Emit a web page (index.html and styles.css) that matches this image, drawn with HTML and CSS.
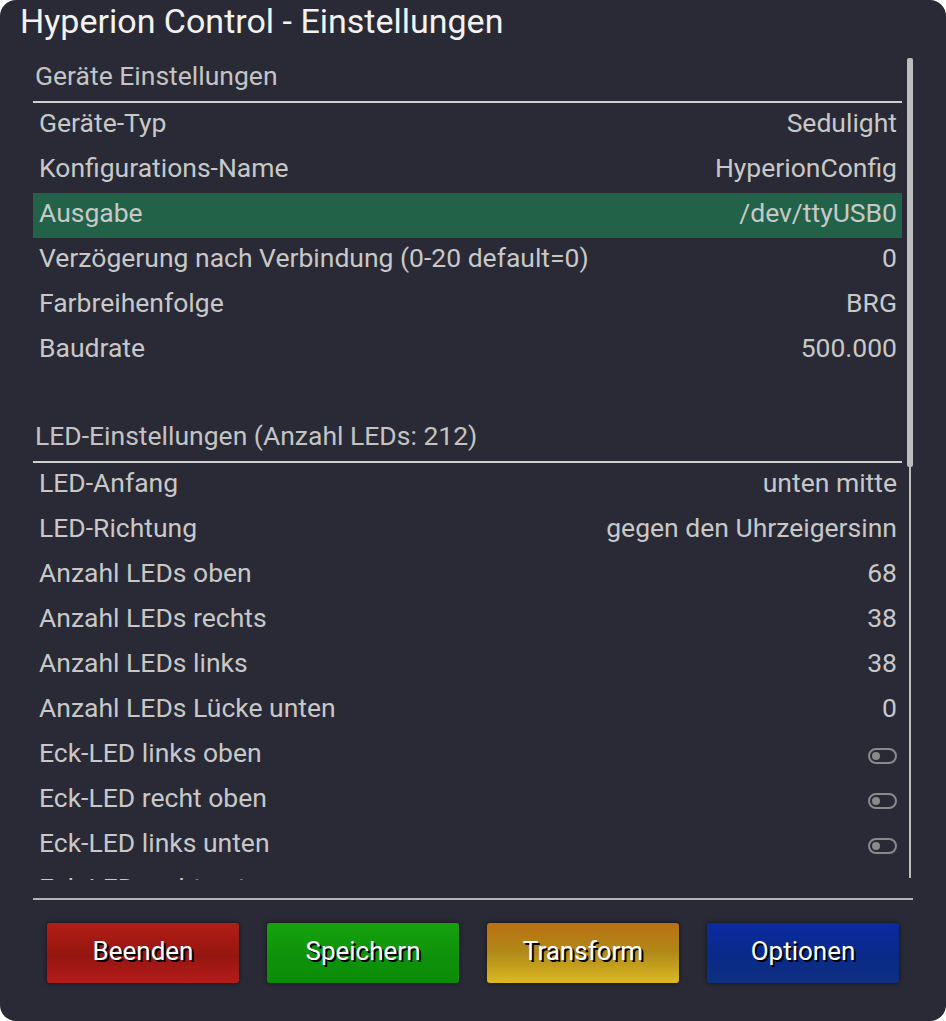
FILE: index.html
```html
<!DOCTYPE html>
<html lang="de">
<head>
  <meta charset="UTF-8">
  <meta name="viewport" content="width=device-width, initial-scale=1.0">
  <title>Hyperion Control - Einstellungen</title>
  <link rel="stylesheet" href="styles.css">
</head>
<body>

  <!-- Fenster -->
  <div class="window">
    <h1 class="title">Hyperion Control - Einstellungen</h1>

    <!-- Liste mit Scrollbalken -->
    <div class="main">
      <div class="list">
        <div class="section">Geräte Einstellungen</div>
        <div class="row"><span>Geräte-Typ</span><span>Sedulight</span></div>
        <div class="row"><span>Konfigurations-Name</span><span>HyperionConfig</span></div>
        <div class="row selected"><span>Ausgabe</span><span>/dev/ttyUSB0</span></div>
        <div class="row"><span>Verzögerung nach Verbindung (0-20 default=0)</span><span>0</span></div>
        <div class="row"><span>Farbreihenfolge</span><span>BRG</span></div>
        <div class="row"><span>Baudrate</span><span>500.000</span></div>

        <div class="spacer"></div>

        <div class="section">LED-Einstellungen (Anzahl LEDs: 212)</div>
        <div class="row"><span>LED-Anfang</span><span>unten mitte</span></div>
        <div class="row"><span>LED-Richtung</span><span>gegen den Uhrzeigersinn</span></div>
        <div class="row"><span>Anzahl LEDs oben</span><span>68</span></div>
        <div class="row"><span>Anzahl LEDs rechts</span><span>38</span></div>
        <div class="row"><span>Anzahl LEDs links</span><span>38</span></div>
        <div class="row"><span>Anzahl LEDs Lücke unten</span><span>0</span></div>
        <div class="row"><span>Eck-LED links oben</span><span class="toggle"></span></div>
        <div class="row"><span>Eck-LED recht oben</span><span class="toggle"></span></div>
        <div class="row"><span>Eck-LED links unten</span><span class="toggle"></span></div>
        <div class="row"><span>Eck-LED recht unten</span><span class="toggle"></span></div>
      </div>

      <div class="scrollbar">
        <div class="thumb"></div>
        <div class="track"></div>
      </div>
    </div>

    <!-- Tasten unten -->
    <div class="footer">
      <button class="key red">Beenden</button>
      <button class="key green">Speichern</button>
      <button class="key yellow">Transform</button>
      <button class="key blue">Optionen</button>
    </div>
  </div>

</body>
</html>
```

FILE: styles.css
```css
/* Seite */
body {
  margin: 0;
  background-color: #ffffff;
  font-family: Roboto, "Liberation Sans", sans-serif;
  color: #c8c8c8;
}

/* Fenster */
.window {
  width: 946px;
  height: 1021px;
  background-color: #292a35;
  border-radius: 16px;
  display: flex;
  flex-direction: column;
  overflow: hidden;
}

.title {
  margin: 0;
  height: 56px;
  padding-left: 20px;
  box-sizing: border-box;
  font-size: 34px;
  font-weight: normal;
  line-height: 43px;
  color: #f2f2f2;
}

/* Liste */
.main {
  display: flex;
  height: 824px;
  margin-left: 33px;
  width: 880px;
}

.list {
  width: 869px;
  height: 100%;
  overflow: hidden;
}

.section {
  height: 45px;
  padding-left: 2px;
  font-size: 26.5px;
  line-height: 40px;
  color: #c4c4c4;
  border-bottom: 2px solid #d0d0d0;
}

.row {
  display: flex;
  justify-content: space-between;
  align-items: center;
  height: 45px;
  padding: 0 5px 6px 6px;
  box-sizing: border-box;
  font-size: 26.5px;
  line-height: 39px;
  white-space: nowrap;
}

.row.selected {
  background-color: #216249;
}

.spacer {
  height: 43px;
}

/* Schalter */
.toggle {
  position: relative;
  width: 25px;
  height: 12px;
  margin-top: 6px;
  border: 2px solid #8a8a8a;
  border-radius: 8px;
}

.toggle::after {
  content: "";
  position: absolute;
  left: 2px;
  top: 2px;
  width: 8px;
  height: 8px;
  border-radius: 50%;
  background-color: #8a8a8a;
}

/* Scrollbalken */
.scrollbar {
  width: 6px;
  margin-left: 5px;
  padding-bottom: 2px;
  box-sizing: border-box;
  display: flex;
  flex-direction: column;
  align-items: center;
}

.thumb {
  width: 6px;
  height: 409px;
  margin-top: 2px;
  border-radius: 2px;
  background-color: #bdbdbd;
}

.track {
  flex: 1;
  width: 2px;
  background-color: #bdbdbd;
}

/* Tasten */
.footer {
  display: flex;
  gap: 28px;
  margin: 18px 0 0 33px;
  width: 880px;
  padding: 23px 0 0 14px;
  box-sizing: border-box;
  border-top: 2px solid #b4b4b4;
}

.key {
  width: 192px;
  height: 60px;
  border: none;
  border-radius: 3px;
  font-family: Roboto, "Liberation Sans", sans-serif;
  font-size: 26px;
  color: #ffffff;
  text-shadow: 2px 2px 0 #000000;
  box-shadow: 0 0 4px rgba(0, 0, 0, 0.6);
  padding: 0 0 4px;
}

.red {
  background: linear-gradient(#b21e16, #951610 55%, #b41c1c);
}

.green {
  background: linear-gradient(#15a20c, #0e920a 55%, #0b8c09);
}

.yellow {
  background: linear-gradient(#ba7014, #b08a18 50%, #dcba22);
}

.blue {
  background: linear-gradient(#0a2aa2, #0a2a88 55%, #0e3080);
}
```
